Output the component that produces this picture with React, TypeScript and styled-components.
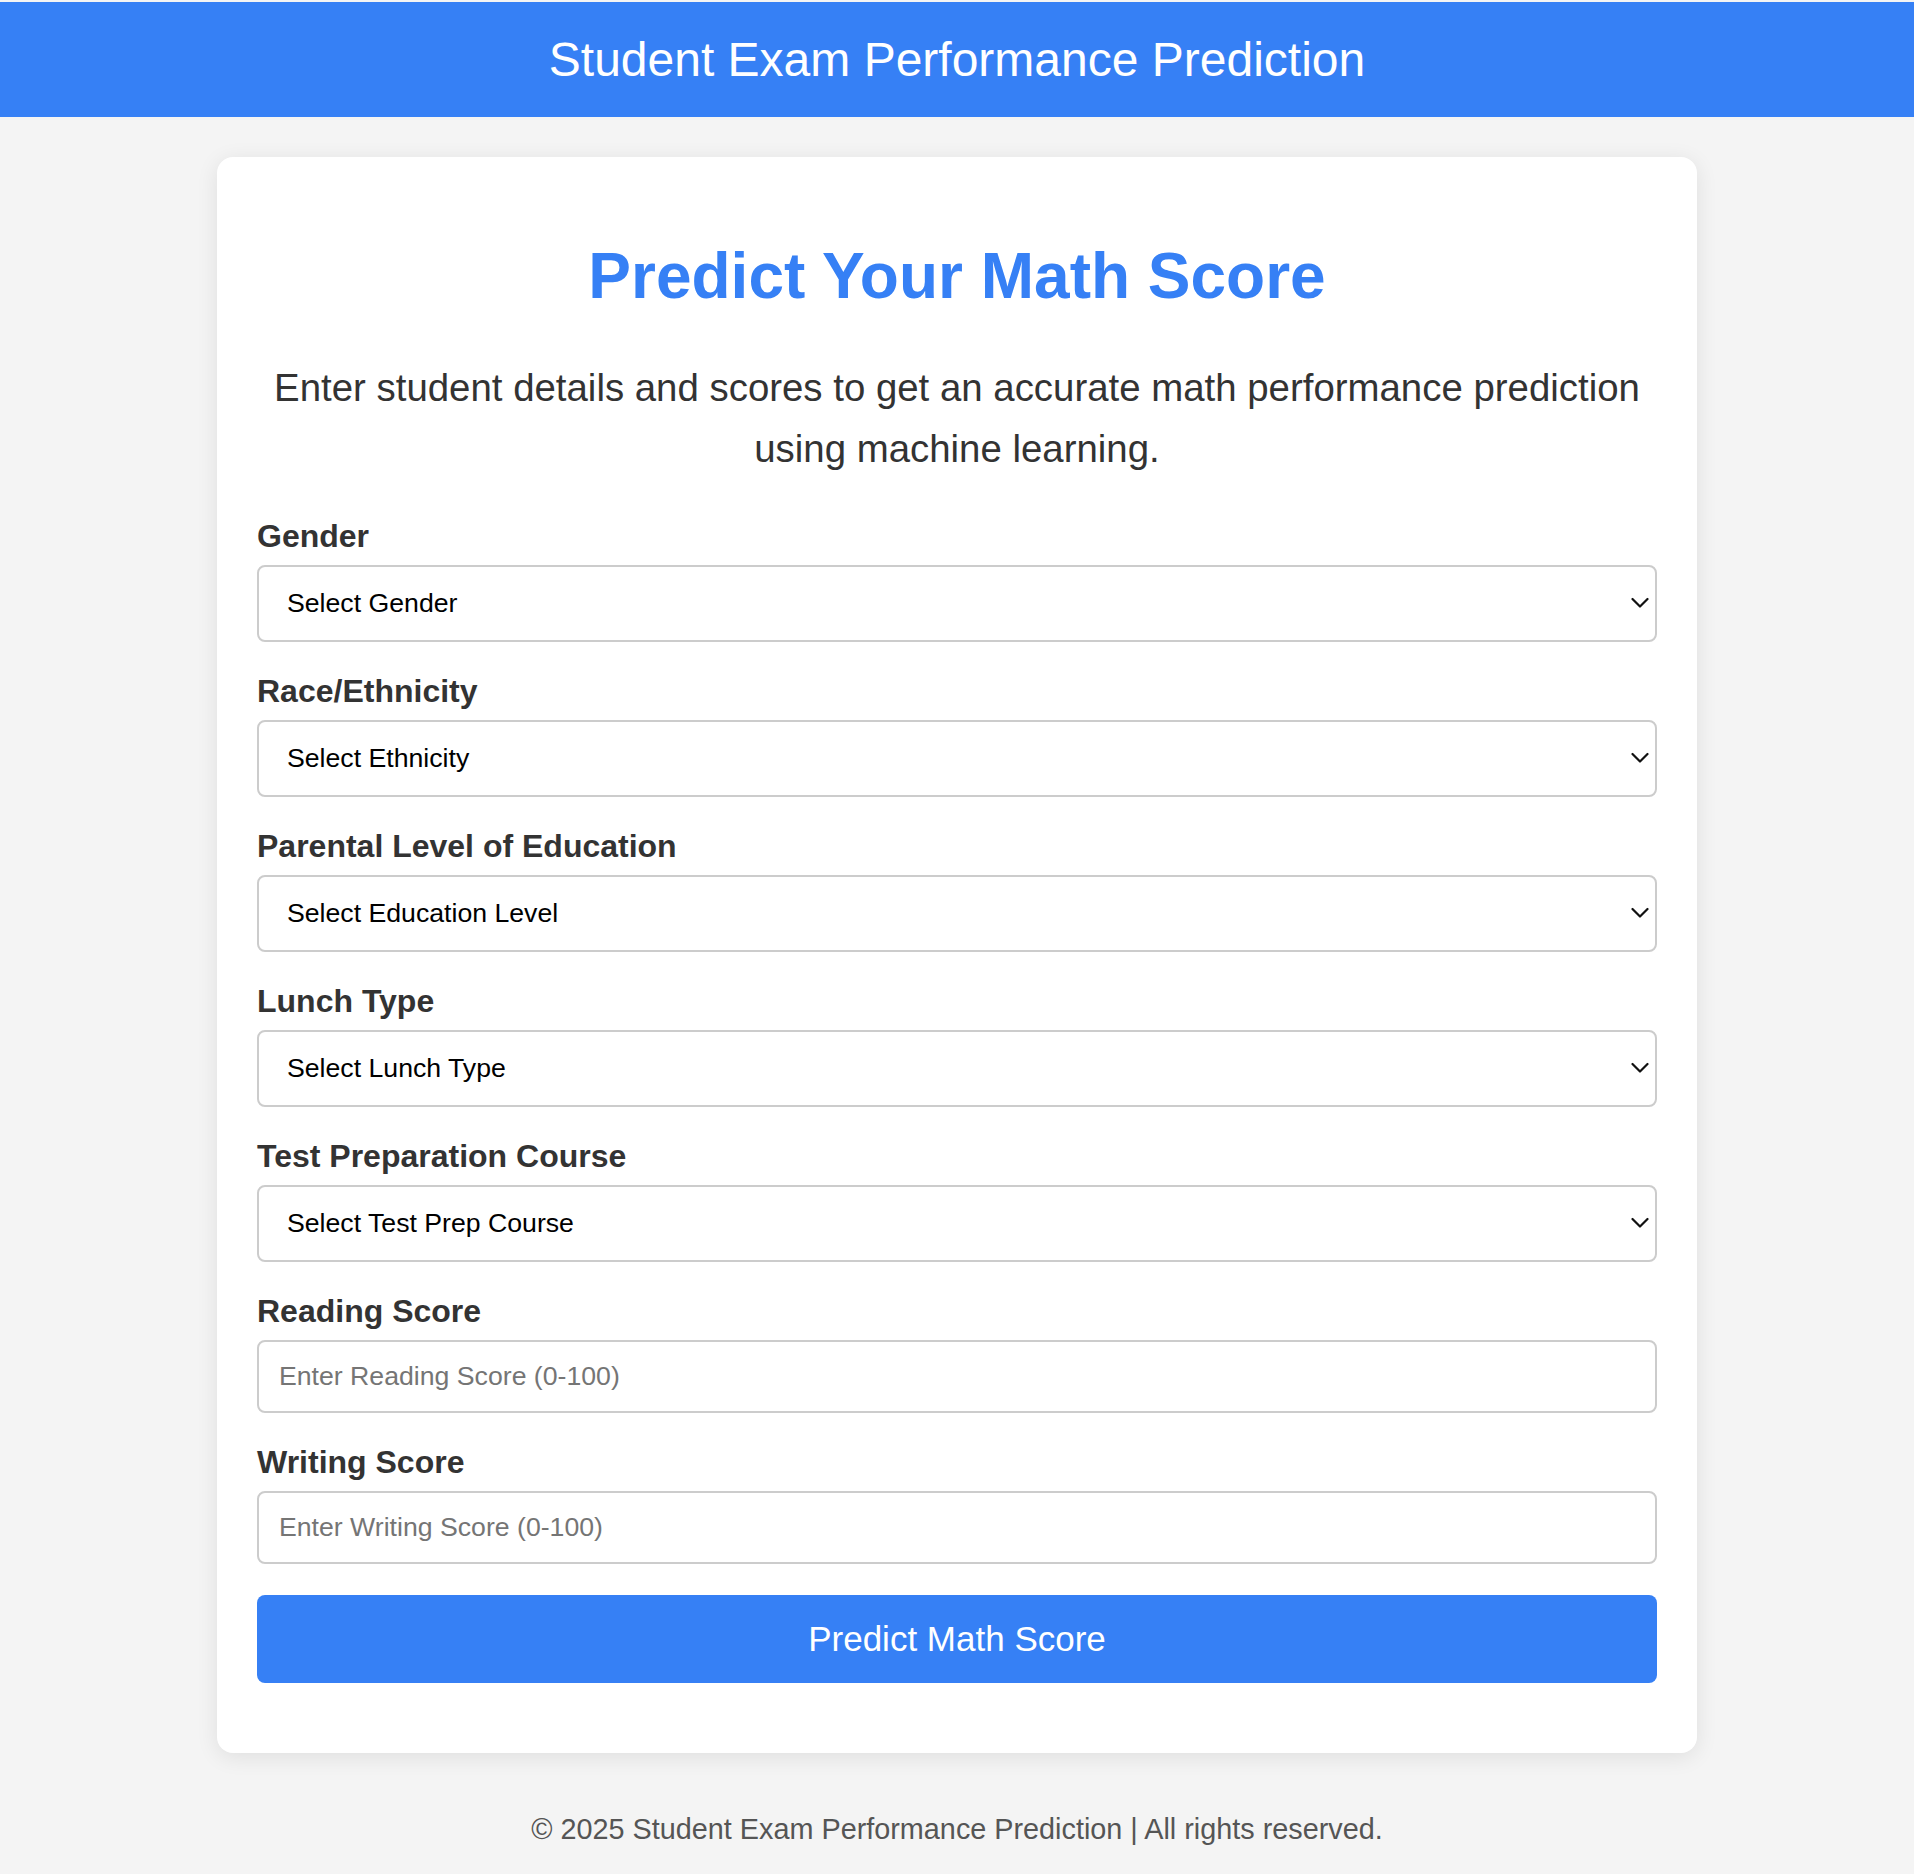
import React from "react";
import styled, { createGlobalStyle } from "styled-components";

const BLUE = "#3680f5";

const GlobalStyle = createGlobalStyle`
  html, body {
    margin: 0;
    padding: 0;
    background: #f4f4f4;
    font-family: "Liberation Sans", Arial, Helvetica, sans-serif;
  }
  * { box-sizing: border-box; }
`;

const Page = styled.div`
  padding-top: 2px;
  min-height: 1874px;
  background: #f4f4f4;
`;

const Header = styled.header`
  background: ${BLUE};
  color: #ffffff;
  text-align: center;
  padding: 30px 0;
`;

const HeaderTitle = styled.h1`
  margin: 0;
  font-size: 48px;
  line-height: 55px;
  font-weight: 400;
`;

const Card = styled.main`
  max-width: 1480px;
  margin: 40px auto;
  background: #ffffff;
  border-radius: 16px;
  padding: 40px 40px 70px;
  box-shadow: 0 4px 22px rgba(0, 0, 0, 0.09);
`;

const Title = styled.h2`
  margin: 43px 0;
  font-size: 64px;
  line-height: 73.5px;
  font-weight: 700;
  color: ${BLUE};
  text-align: center;
`;

const Intro = styled.p`
  margin: 0 0 38px;
  font-size: 38.4px;
  line-height: 61.7px;
  color: #333333;
  text-align: center;
`;

const Form = styled.form`
  display: flex;
  flex-direction: column;
`;

const Field = styled.div`
  display: flex;
  flex-direction: column;
  margin-bottom: 31px;
`;

const Label = styled.label`
  font-size: 32px;
  line-height: 37px;
  font-weight: 700;
  color: #333333;
  margin-bottom: 10px;
`;

const SelectWrap = styled.div`
  position: relative;
`;

const Select = styled.select`
  width: 100%;
  height: 77px;
  border: 2px solid #cccccc;
  border-radius: 8px;
  padding: 0 50px 0 28px;
  font-family: "Liberation Sans", Arial, sans-serif;
  font-size: 26.67px;
  color: #000000;
  background: #ffffff;
  appearance: none;
  -webkit-appearance: none;
  outline: none;
`;

const Chevron = styled.svg`
  position: absolute;
  right: 8px;
  top: 50%;
  transform: translateY(-50%);
  pointer-events: none;
`;

const Input = styled.input`
  width: 100%;
  height: 73px;
  border: 2px solid #cccccc;
  border-radius: 8px;
  padding: 0 20px;
  font-family: "Liberation Sans", Arial, sans-serif;
  font-size: 26.67px;
  color: #000000;
  background: #ffffff;
  outline: none;
  &::placeholder {
    color: #757575;
  }
`;

const Button = styled.button`
  width: 100%;
  height: 88px;
  border: none;
  border-radius: 8px;
  background: ${BLUE};
  color: #ffffff;
  font-family: "Liberation Sans", Arial, sans-serif;
  font-size: 35px;
  cursor: pointer;
`;

const Footer = styled.footer`
  text-align: center;
  padding: 20px 0;
  font-size: 28.8px;
  line-height: 33px;
  color: #555555;
`;

type SelectFieldProps = { id: string; label: string; placeholder: string; options: string[] };

function SelectField({ id, label, placeholder, options }: SelectFieldProps) {
  return (
    <Field>
      <Label htmlFor={id}>{label}</Label>
      <SelectWrap>
        <Select id={id} defaultValue="">
          <option value="" disabled>
            {placeholder}
          </option>
          {options.map((o) => (
            <option key={o} value={o}>
              {o}
            </option>
          ))}
        </Select>
        <Chevron width="18" height="11" viewBox="0 0 18 11">
          <polyline points="1.5,1.5 9,9 16.5,1.5" fill="none" stroke="#111" strokeWidth="2.2" strokeLinecap="round" strokeLinejoin="round" />
        </Chevron>
      </SelectWrap>
    </Field>
  );
}

type InputFieldProps = { id: string; label: string; placeholder: string };

function InputField({ id, label, placeholder }: InputFieldProps) {
  return (
    <Field>
      <Label htmlFor={id}>{label}</Label>
      <Input id={id} type="number" min={0} max={100} placeholder={placeholder} />
    </Field>
  );
}

export default function App() {
  return (
    <Page>
      <GlobalStyle />
      <Header>
        <HeaderTitle>Student Exam Performance Prediction</HeaderTitle>
      </Header>
      <Card>
        <Title>Predict Your Math Score</Title>
        <Intro>
          Enter student details and scores to get an accurate math performance prediction using machine learning.
        </Intro>
        <Form onSubmit={(e) => e.preventDefault()}>
          <SelectField id="gender" label="Gender" placeholder="Select Gender" options={["male", "female"]} />
          <SelectField
            id="ethnicity"
            label="Race/Ethnicity"
            placeholder="Select Ethnicity"
            options={["group A", "group B", "group C", "group D", "group E"]}
          />
          <SelectField
            id="education"
            label="Parental Level of Education"
            placeholder="Select Education Level"
            options={["associate's degree", "bachelor's degree", "high school", "master's degree", "some college", "some high school"]}
          />
          <SelectField id="lunch" label="Lunch Type" placeholder="Select Lunch Type" options={["free/reduced", "standard"]} />
          <SelectField
            id="prep"
            label="Test Preparation Course"
            placeholder="Select Test Prep Course"
            options={["none", "completed"]}
          />
          <InputField id="reading" label="Reading Score" placeholder="Enter Reading Score (0-100)" />
          <InputField id="writing" label="Writing Score" placeholder="Enter Writing Score (0-100)" />
          <Button type="submit">Predict Math Score</Button>
        </Form>
      </Card>
      <Footer>© 2025 Student Exam Performance Prediction | All rights reserved.</Footer>
    </Page>
  );
}
